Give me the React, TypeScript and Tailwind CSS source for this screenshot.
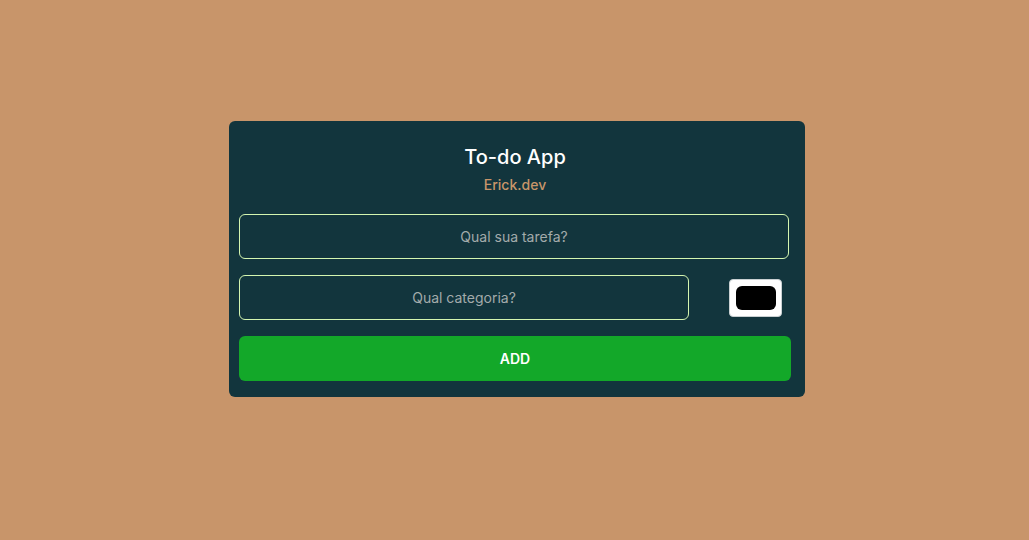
import React from 'react';

export default function App() {
  const [task, setTask] = React.useState('');
  const [category, setCategory] = React.useState('');

  return (
    <div
      className="flex h-[540px] w-full items-start justify-center bg-[#c8956a] pl-[5px] pt-[121px]"
      style={{ fontFamily: 'Inter, "Noto Sans", sans-serif' }}
    >
      <div className="flex w-[576px] flex-col rounded-md bg-[#12353d] pb-4 pl-[10px] pr-[14px] pt-[21px]">
        <h1 className="text-center text-[20px] leading-[30px] font-medium text-white">To-do App</h1>
        <p className="mt-[3px] text-center text-[14px] leading-[20px] font-medium text-[#c8956a]">Erick.dev</p>

        <input
          value={task}
          onChange={(e) => setTask(e.target.value)}
          placeholder="Qual sua tarefa?"
          className="mt-[19px] h-[45px] w-[550px] rounded-md border border-[#d4f5b0] bg-transparent text-center text-[14px] text-white outline-none placeholder:text-[#a3abab]"
        />

        <div className="mt-4 flex items-center">
          <input
            value={category}
            onChange={(e) => setCategory(e.target.value)}
            placeholder="Qual categoria?"
            className="h-[45px] w-[450px] rounded-md border border-[#d4f5b0] bg-transparent text-center text-[14px] text-white outline-none placeholder:text-[#a3abab]"
          />
          <div className="ml-10 flex h-[38px] w-[53px] items-center justify-center rounded-[4px] border border-[#c9d0d2] bg-white">
            <div className="h-[24px] w-[40px] rounded-[6px] bg-black" />
          </div>
        </div>

        <button className="mt-4 h-[45px] w-[552px] rounded-md bg-[#13a829] text-[14px] font-semibold text-white">
          ADD
        </button>
      </div>
    </div>
  );
}
